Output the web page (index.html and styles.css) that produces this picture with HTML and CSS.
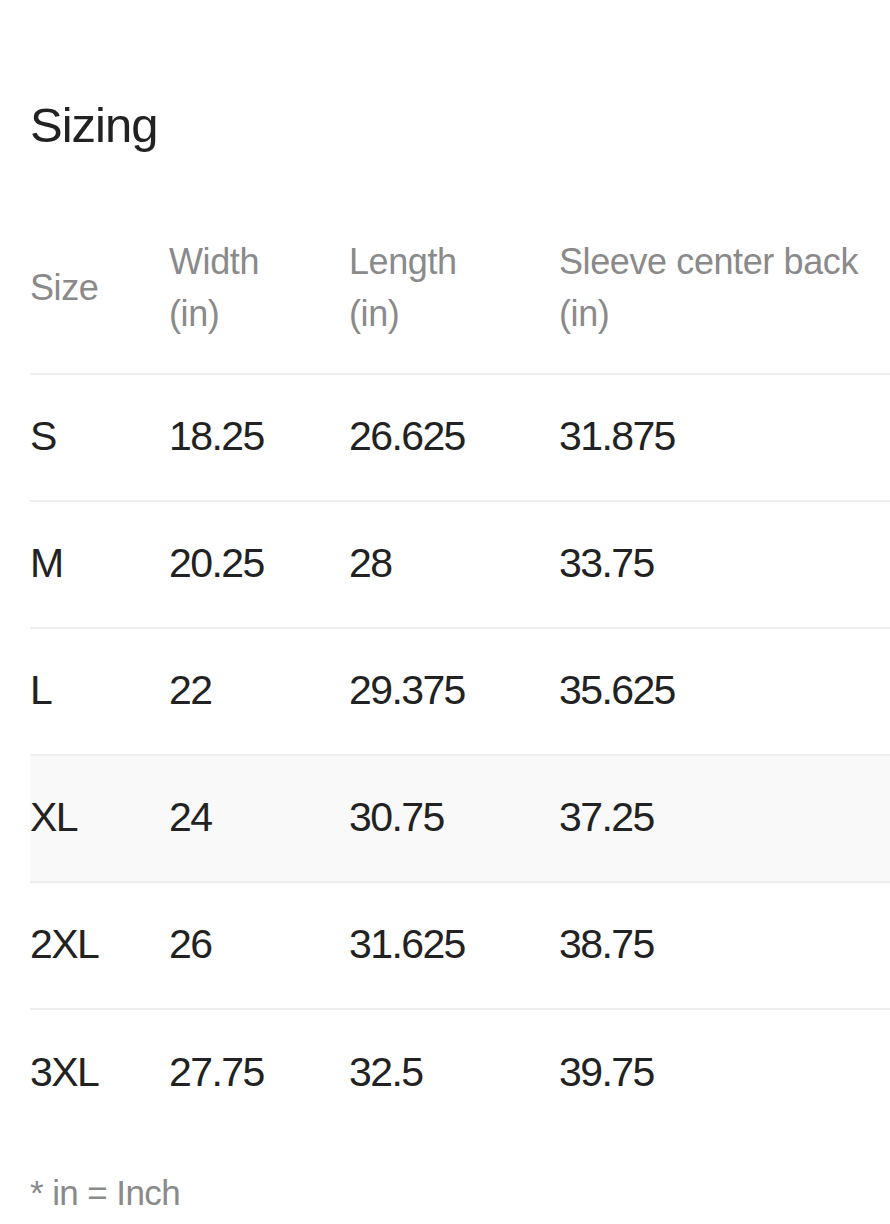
FILE: index.html
```html
<!DOCTYPE html>
<html>
<head>
<meta charset="utf-8">
<link rel="stylesheet" href="styles.css">
</head>
<body>
<main class="page">
  <h1 class="title">Sizing</h1>
  <div class="table">
    <div class="row head">
      <div class="cell">Size</div>
      <div class="cell">Width<br>(in)</div>
      <div class="cell">Length<br>(in)</div>
      <div class="cell">Sleeve center back<br>(in)</div>
    </div>
    <div class="row"><div class="cell">S</div><div class="cell">18.25</div><div class="cell">26.625</div><div class="cell">31.875</div></div>
    <div class="row"><div class="cell">M</div><div class="cell">20.25</div><div class="cell">28</div><div class="cell">33.75</div></div>
    <div class="row"><div class="cell">L</div><div class="cell">22</div><div class="cell">29.375</div><div class="cell">35.625</div></div>
    <div class="row hover"><div class="cell">XL</div><div class="cell">24</div><div class="cell">30.75</div><div class="cell">37.25</div></div>
    <div class="row"><div class="cell">2XL</div><div class="cell">26</div><div class="cell">31.625</div><div class="cell">38.75</div></div>
    <div class="row last"><div class="cell">3XL</div><div class="cell">27.75</div><div class="cell">32.5</div><div class="cell">39.75</div></div>
  </div>
  <p class="note">* in = Inch</p>
</main>
</body>
</html>
```

FILE: styles.css
```css
* { box-sizing: border-box; }
html, body { margin: 0; padding: 0; background: #fff; }
body {
  font-family: "Liberation Sans", Arial, sans-serif;
  color: #222;
  overflow: hidden;
}
.page {
  padding: 0 0 0 30px;
  width: 890px;
}
.title {
  margin: 0;
  padding-top: 97px;
  font-size: 49px;
  line-height: 56px;
  font-weight: 400;
  letter-spacing: -1px;
  color: #222;
}
.table {
  margin-top: 52px;
  width: 860px;
}
.row {
  display: grid;
  grid-template-columns: 139px 180px 210px 1fr;
  align-items: center;
  height: 127px;
  padding-bottom: 3px;
  border-bottom: 2px solid #eeeeee;
  font-size: 41px;
  letter-spacing: -1.6px;
  color: #222;
}
.row.head {
  height: 170px;
  padding-bottom: 2px;
  font-size: 36px;
  line-height: 52px;
  letter-spacing: -0.4px;
  color: #8a8a8a;
}
.row.hover { background: #f9f9f9; }
.row.last { border-bottom: none; }
.note {
  margin: 36px 0 0;
  font-size: 35px;
  line-height: 40px;
  letter-spacing: -0.6px;
  color: #8a8a8a;
}
```
